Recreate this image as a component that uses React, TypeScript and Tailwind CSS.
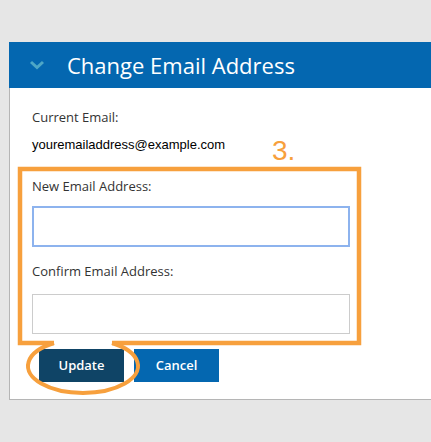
const openSans = { fontFamily: '"Open Sans", "Noto Sans", sans-serif' };

function Chevron() {
  return (
    <svg width="16" height="10" viewBox="0 0 16 10" className="block">
      <path d="M2 2 L8 7.5 L14 2" fill="none" stroke="#4ea7c6" strokeWidth="3" />
    </svg>
  );
}

function Annotation() {
  // hand-drawn orange highlight: box around the inputs, ring around the Update button
  return (
    <svg
      className="absolute left-0 top-0 pointer-events-none"
      width="431"
      height="442"
      viewBox="0 0 431 442"
    >
      <path
        d="M112 343 L359 343 L359 169 L20 169 L20 343 L54 343"
        fill="none"
        stroke="#f7a03d"
        strokeWidth="4.5"
      />
      <path
        d="M54 343 A55 27 0 1 0 112 343"
        fill="none"
        stroke="#f7a03d"
        strokeWidth="4"
      />
      <text
        x="272"
        y="160"
        fill="#f7a03d"
        fontSize="28"
        fontFamily='"Liberation Sans", Arial, sans-serif'
      >
        3.
      </text>
    </svg>
  );
}

export default function App() {
  return (
    <div className="relative w-[431px] h-[442px] overflow-hidden bg-[#e6e6e6]">
      <div className="pt-[42px] pl-[9px]">
        <div className="w-[440px] bg-white border-l border-b border-[#b5b5b5]">
          {/* Header */}
          <div className="h-[46px] -ml-px bg-[#0467b0] flex items-center" style={openSans}>
            <div className="w-[58px] pl-[20px] flex items-center">
              <Chevron />
            </div>
            <h2 className="text-[22px] text-white leading-none">Change Email Address</h2>
          </div>

          {/* Body */}
          <div className="pl-[22px] pt-[19px] pb-[17px]">
            <div className="text-[13px] text-[#333] leading-[20px]" style={openSans}>
              Current Email:
            </div>
            <div
              className="mt-[8px] text-[13px] text-black leading-[20px]"
              style={{ fontFamily: '"Liberation Sans", Arial, sans-serif' }}
            >
              youremailaddress@example.com
            </div>

            <div className="mt-[21px] text-[13px] text-[#333] leading-[20px]" style={openSans}>
              New Email Address:
            </div>
            <input
              className="mt-[10px] block w-[318px] h-[41px] bg-white border-2 border-[#8db3ee] outline-none"
              type="email"
            />

            <div className="mt-[14px] text-[13px] text-[#333] leading-[20px]" style={openSans}>
              Confirm Email Address:
            </div>
            <input
              className="mt-[13px] block w-[318px] h-[40px] bg-white border border-[#cccccc] outline-none"
              type="email"
            />

            <div className="mt-[15px] flex gap-[10px] ml-[7px]" style={openSans}>
              <button className="w-[85px] h-[33px] bg-[#0f4466] text-white text-[13px] font-semibold">
                Update
              </button>
              <button className="w-[85px] h-[33px] bg-[#0467b0] text-white text-[13px] font-semibold">
                Cancel
              </button>
            </div>
          </div>
        </div>
      </div>
      <Annotation />
    </div>
  );
}
